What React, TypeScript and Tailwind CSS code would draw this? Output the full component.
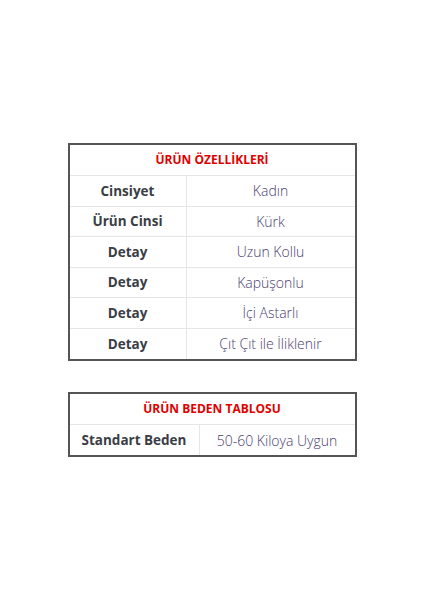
import React from "react";

const font = { fontFamily: '"Open Sans", "Noto Sans", sans-serif' };

const rows: [string, string][] = [
  ["Cinsiyet", "Kadın"],
  ["Ürün Cinsi", "Kürk"],
  ["Detay", "Uzun Kollu"],
  ["Detay", "Kapüşonlu"],
  ["Detay", "İçi Astarlı"],
  ["Detay", "Çıt Çıt ile İliklenir"],
];

export default function App() {
  return (
    <div className="min-h-[600px] w-full bg-white pt-[143px] flex flex-col items-center" style={font}>
      <div className="w-[289px] border-2 border-[#555555] flex flex-col">
        <div className="h-[31px] border-b border-[#e6e6e6] flex items-center justify-center text-[12px] font-bold text-[#e00000]">
          ÜRÜN ÖZELLİKLERİ
        </div>
        {rows.map(([k, v], i) => (
          <div
            key={i}
            className={`h-[30.5px] flex ${i < rows.length - 1 ? "border-b border-[#e6e6e6]" : ""}`}
          >
            <div className="w-[117px] shrink-0 border-r border-[#e6e6e6] flex items-center justify-center text-[13.5px] font-bold text-[#3a3d45]">
              {k}
            </div>
            <div className="flex-1 flex items-center justify-center text-[14px] font-light text-[#4a3d70]">
              {v}
            </div>
          </div>
        ))}
      </div>

      <div className="mt-[31px] w-[289px] border-2 border-[#555555] flex flex-col">
        <div className="h-[31px] border-b border-[#e6e6e6] flex items-center justify-center text-[12px] font-bold text-[#e00000]">
          ÜRÜN BEDEN TABLOSU
        </div>
        <div className="h-[30px] flex">
          <div className="w-[130px] shrink-0 border-r border-[#e6e6e6] flex items-center justify-center text-[13.5px] font-bold text-[#3a3d45]">
            Standart Beden
          </div>
          <div className="flex-1 flex items-center justify-center text-[14px] font-light text-[#4a3d70]">
            50-60 Kiloya Uygun
          </div>
        </div>
      </div>
    </div>
  );
}
